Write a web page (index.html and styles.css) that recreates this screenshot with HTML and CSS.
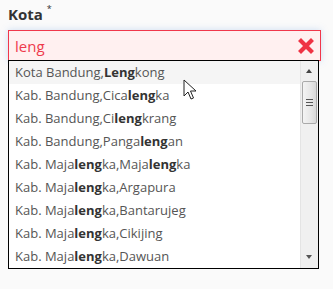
FILE: index.html
```html
<!DOCTYPE html>
<html lang="id">
  <head>
    <meta charset="UTF-8" />
    <meta name="viewport" content="width=device-width, initial-scale=1.0" />
    <title>Kota</title>
    <link rel="stylesheet" href="styles.css">
  </head>
  <body>
    <div class="field">
      <label class="field-label">Kota <sup>*</sup></label>
      <div class="search-box">
        <span class="search-text">leng</span>
        <svg class="clear-btn" width="16" height="16" viewBox="0 0 16 16">
          <path d="M3 3 L13 13 M13 3 L3 13" stroke="#ef3344" stroke-width="4.2" stroke-linecap="square" fill="none" />
        </svg>
      </div>
      <div class="suggest">
        <ul class="suggest-list">
          <li class="suggest-item hover">Kota Bandung,<b>Leng</b>kong</li>
          <li class="suggest-item">Kab. Bandung,Cica<b>leng</b>ka</li>
          <li class="suggest-item">Kab. Bandung,Ci<b>leng</b>krang</li>
          <li class="suggest-item">Kab. Bandung,Panga<b>leng</b>an</li>
          <li class="suggest-item">Kab. Maja<b>leng</b>ka,Maja<b>leng</b>ka</li>
          <li class="suggest-item">Kab. Maja<b>leng</b>ka,Argapura</li>
          <li class="suggest-item">Kab. Maja<b>leng</b>ka,Bantarujeg</li>
          <li class="suggest-item">Kab. Maja<b>leng</b>ka,Cikijing</li>
          <li class="suggest-item">Kab. Maja<b>leng</b>ka,Dawuan</li>
        </ul>
        <div class="scrollbar">
          <span class="scroll-arrow up"></span>
          <div class="scroll-thumb">
            <span class="grip"></span>
          </div>
          <div class="scroll-track"></div>
          <span class="scroll-arrow down"></span>
        </div>
        <!-- mouse pointer over the first item -->
        <svg class="pointer" width="14" height="22" viewBox="0 0 14 22">
          <path d="M1 1 L1 17 L5 13 L8 20 L10.5 19 L7.5 12 L13 12 Z" fill="#fff" stroke="#222" stroke-width="1" stroke-linejoin="round" />
        </svg>
      </div>
    </div>
  </body>
</html>
```

FILE: styles.css
```css
* {
  margin: 0;
  padding: 0;
  list-style: none;
  box-sizing: border-box;
}
body {
  background: #fafafa;
  font-family: "Open Sans", "Liberation Sans", sans-serif;
}
.field {
  padding: 4px 12px 0 8px;
  width: 333px;
}
.field-label {
  display: block;
  height: 26px;
  font-size: 15px;
  font-weight: bold;
  color: #333;
  line-height: 20px;
}
.field-label sup {
  font-size: 9px;
  font-weight: normal;
  vertical-align: 8px;
  line-height: 0;
}
.search-box {
  display: flex;
  align-items: center;
  justify-content: space-between;
  height: 31px;
  padding: 0 6px 0 6px;
  background: #fff0f0;
  border: 1px solid #f0374b;
  box-shadow: 0 0 7px rgba(120, 170, 230, 0.35);
}
.search-text {
  color: #ee3a4c;
  font-size: 15px;
}
.clear-btn {
  display: block;
}
.suggest {
  position: relative;
  display: flex;
  width: 311px;
  height: 209px;
  margin-top: -1px;
  background: #fff;
  border: 1px solid #000;
}
.suggest-list {
  flex: 1;
  overflow: hidden;
}
.suggest-item {
  height: 23px;
  line-height: 23px;
  padding-left: 6px;
  font-size: 13px;
  color: #555;
  white-space: nowrap;
}
.suggest-item b {
  color: #333;
}
.suggest-item.hover {
  background: #f5f5f5;
}
.scrollbar {
  display: flex;
  flex-direction: column;
  width: 18px;
  background: #f0f0f0;
  border-left: 1px solid #e4e4e4;
}
.scroll-arrow {
  display: block;
  height: 20px;
  position: relative;
}
.scroll-arrow::after {
  content: "";
  position: absolute;
  left: 5px;
  width: 0;
  height: 0;
  border-left: 3.5px solid transparent;
  border-right: 3.5px solid transparent;
}
.scroll-arrow.up::after {
  top: 8px;
  border-bottom: 4px solid #444;
}
.scroll-arrow.down::after {
  bottom: 9px;
  border-top: 4px solid #555;
}
.scroll-thumb {
  display: flex;
  align-items: center;
  justify-content: center;
  height: 43px;
  margin: 0 1px;
  border: 1px solid #aaa;
  border-radius: 2px;
  background: linear-gradient(to right, #f4f4f4, #e6e6e6 60%, #d8d8d8);
}
.grip {
  display: block;
  width: 7px;
  height: 7px;
  background: repeating-linear-gradient(to bottom, #555 0, #555 1px, transparent 1px, transparent 3px);
}
.scroll-track {
  flex: 1;
}
.pointer {
  position: absolute;
  left: 174px;
  top: 18px;
}
```
